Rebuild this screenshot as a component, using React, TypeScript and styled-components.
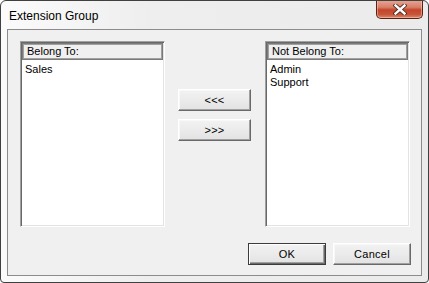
import React from "react";
import styled, { createGlobalStyle } from "styled-components";

const GlobalStyle = createGlobalStyle`
  html, body {
    margin: 0;
    padding: 0;
    background: #ffffff;
  }
  body {
    font-family: "Liberation Sans", Arial, sans-serif;
  }
`;

const Window = styled.div`
  width: 429px;
  height: 283px;
  box-sizing: border-box;
  border: 1px solid #404040;
  border-radius: 6px 6px 4px 4px;
  background: linear-gradient(90deg, #fbfbfb 0%, #eeeeee 35%, #ebebeb 100%);
  display: flex;
  flex-direction: column;
  padding: 0 6px 6px 6px;
  overflow: hidden;
`;

const TitleBar = styled.div`
  height: 28px;
  display: flex;
  justify-content: space-between;
  align-items: flex-start;
  flex-shrink: 0;
`;

const Title = styled.div`
  font-family: "Liberation Sans", Arial, sans-serif;
  font-size: 12px;
  color: #000000;
  padding: 8px 0 0 2px;
  line-height: 14px;
`;

const CloseButton = styled.div`
  width: 47px;
  height: 19px;
  margin: -1px -1px 0 0;
  box-sizing: border-box;
  border: 1px solid #5a2116;
  border-top: none;
  border-radius: 0 0 5px 5px;
  background: linear-gradient(
    180deg,
    #e8a795 0%,
    #d88068 40%,
    #c4452c 55%,
    #c75437 80%,
    #d98a6f 100%
  );
  box-shadow: inset 0 0 0 1px rgba(255, 220, 210, 0.45);
  display: flex;
  align-items: center;
  justify-content: center;
`;

const Client = styled.div`
  flex: 1;
  border: 1px solid #8c8c8c;
  background: #f0f0f0;
  display: flex;
  flex-direction: column;
  padding: 11px 10px 10px 12px;
`;

const Columns = styled.div`
  display: grid;
  grid-template-columns: 145px 100px 145px;
`;

const ListBox = styled.div`
  height: 186px;
  box-sizing: border-box;
  background: #ffffff;
  border: 1px solid;
  border-color: #a0a0a0 #ffffff #ffffff #a0a0a0;
  box-shadow: inset 1px 1px 0 #696969, inset -1px -1px 0 #e3e3e3;
  padding: 1px;
  display: flex;
  flex-direction: column;
`;

const ListHeader = styled.div`
  height: 17px;
  box-sizing: border-box;
  background: #f0f0f0;
  border: 1px solid #7a7a7a;
  box-shadow: inset 0 0 0 1px #a0a0a0;
  font-size: 11px;
  line-height: 15px;
  padding-left: 4px;
  color: #000000;
`;

const ListItems = styled.div`
  padding: 3px 0 0 3px;
`;

const Item = styled.div`
  font-size: 11px;
  line-height: 13px;
  color: #000000;
`;

const Mover = styled.div`
  display: flex;
  flex-direction: column;
  align-items: flex-start;
  gap: 8px;
  padding: 48px 0 0 13px;
`;

const Button = styled.div<{ $default?: boolean; $w: number }>`
  width: ${(p) => p.$w}px;
  height: 22px;
  box-sizing: border-box;
  background: linear-gradient(180deg, #f2f2f2 0%, #ebebeb 50%, #e2e2e2 100%);
  border: 1px solid;
  border-color: ${(p) =>
    p.$default ? "#3c3c3c" : "#ffffff #696969 #696969 #ffffff"};
  box-shadow: ${(p) =>
    p.$default
      ? "inset 1px 1px 0 #ffffff, inset -1px -1px 0 #696969, inset -2px -2px 0 #a0a0a0"
      : "inset -1px -1px 0 #a0a0a0, inset 1px 1px 0 #f8f8f8"};
  font-size: 11px;
  color: #000000;
  display: flex;
  align-items: center;
  justify-content: center;
  letter-spacing: 0.3px;
`;

const Footer = styled.div`
  margin-top: auto;
  display: flex;
  justify-content: flex-end;
  gap: 7px;
`;

const CloseIcon = () => (
  <svg width="14" height="11" viewBox="0 0 14 11">
    <path
      d="M2.5 1.5 L11.5 9.5 M11.5 1.5 L2.5 9.5"
      stroke="#4a2a22"
      strokeWidth="4.2"
      strokeLinecap="square"
    />
    <path
      d="M2.5 1.5 L11.5 9.5 M11.5 1.5 L2.5 9.5"
      stroke="#ffffff"
      strokeWidth="2.4"
      strokeLinecap="square"
    />
  </svg>
);

const List = ({ title, items }: { title: string; items: string[] }) => (
  <ListBox>
    <ListHeader>{title}</ListHeader>
    <ListItems>
      {items.map((it) => (
        <Item key={it}>{it}</Item>
      ))}
    </ListItems>
  </ListBox>
);

export default function App() {
  return (
    <>
      <GlobalStyle />
      <Window>
        <TitleBar>
          <Title>Extension Group</Title>
          <CloseButton>
            <CloseIcon />
          </CloseButton>
        </TitleBar>
        <Client>
          <Columns>
            <List title="Belong To:" items={["Sales"]} />
            <Mover>
              <Button $w={73}>&lt;&lt;&lt;</Button>
              <Button $w={73}>&gt;&gt;&gt;</Button>
            </Mover>
            <List title="Not Belong To:" items={["Admin", "Support"]} />
          </Columns>
          <Footer>
            <Button $default $w={78}>
              OK
            </Button>
            <Button $w={78}>Cancel</Button>
          </Footer>
        </Client>
      </Window>
    </>
  );
}
